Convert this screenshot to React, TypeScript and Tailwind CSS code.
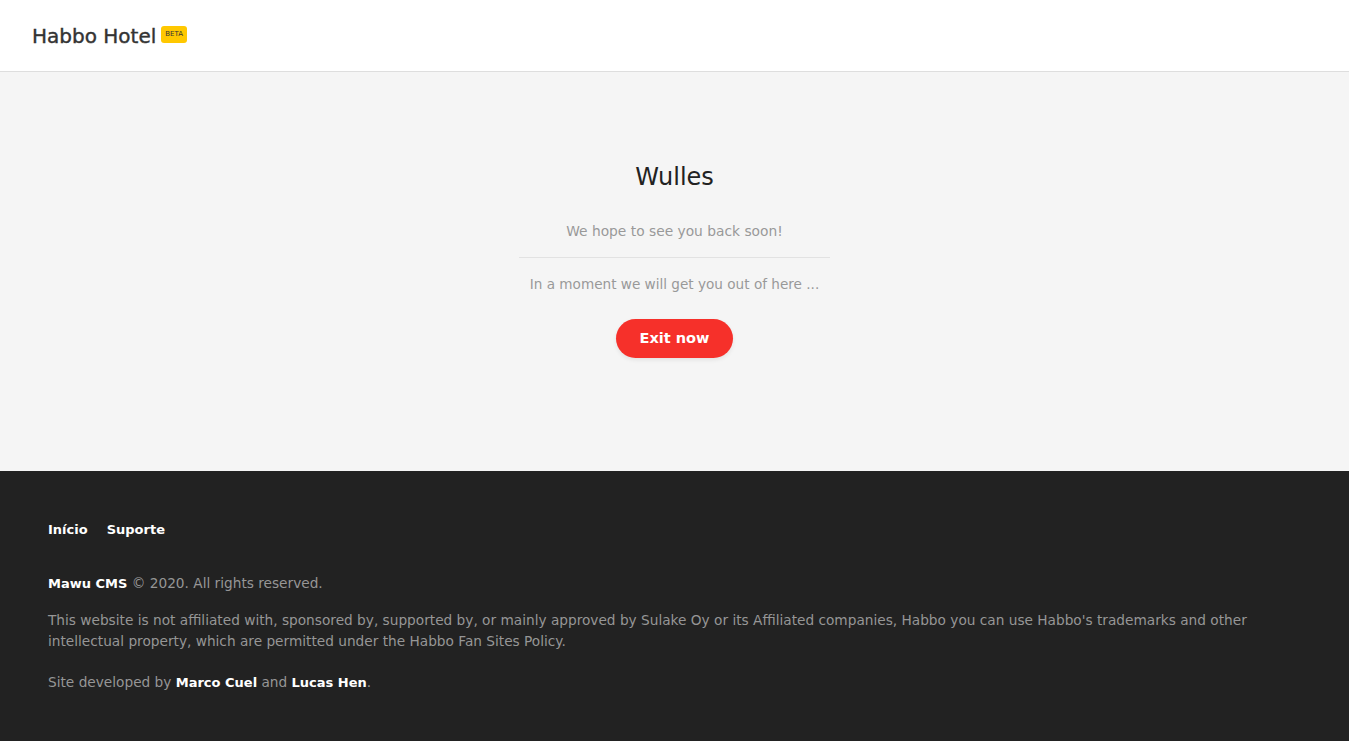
export default function App() {
  const font = { fontFamily: '"DejaVu Sans", "Noto Sans", sans-serif' };
  return (
    <div className="min-h-screen flex flex-col" style={font}>
      <header className="h-[72px] bg-white border-b border-[#dedede] shadow-[0_1px_3px_rgba(0,0,0,0.06)] flex items-center px-8 shrink-0">
        <div className="flex items-center gap-[5px]">
          <span className="text-[20px] text-[#333] tracking-[0px] [-webkit-text-stroke:0.4px_#333]">Habbo Hotel</span>
          <span className="bg-[#ffc800] rounded-[3px] text-[7px] leading-none px-[4px] py-[5px] mt-[-2px] text-[#333] font-medium">BETA</span>
        </div>
      </header>
      <main className="bg-[#f5f5f5] h-[399px] flex flex-col items-center pt-[91px] shrink-0">
        <h1 className="text-[24px] text-[#222] leading-[28px]">Wulles</h1>
        <p className="mt-[30px] text-[13.8px] text-[#999] leading-5">We hope to see you back soon!</p>
        <div className="w-[311px] h-px bg-[#e2e2e2] mt-[16px]" />
        <p className="mt-[16px] text-[13.6px] text-[#999] leading-5">In a moment we will get you out of here ...</p>
        <button className="mt-[25px] w-[117px] h-[39px] rounded-full bg-[#f6302a] text-white font-bold text-[14.5px] shadow-[0_2px_4px_rgba(0,0,0,0.08)]">Exit now</button>
      </main>
      <footer className="bg-[#222222] flex-1 px-12 pt-[49px] pb-10 text-[13.7px]">
        <nav className="flex gap-[19px] text-white font-semibold leading-5 text-[13px]">
          <a>Início</a>
          <a>Suporte</a>
        </nav>
        <p className="mt-[33px] text-[#969696] leading-5"><span className="text-white font-semibold text-[13px]">Mawu CMS</span> © 2020. All rights reserved.</p>
        <p className="mt-[16px] text-[#969696] leading-[21px] max-w-[1220px]">This website is not affiliated with, sponsored by, supported by, or mainly approved by Sulake Oy or its Affiliated companies, Habbo you can use Habbo's trademarks and other intellectual property, which are permitted under the Habbo Fan Sites Policy.</p>
        <p className="mt-[20px] text-[#969696] leading-5">Site developed by <span className="text-white font-semibold text-[13px]">Marco Cuel</span> and <span className="text-white font-semibold text-[13px]">Lucas Hen</span>.</p>
      </footer>
    </div>
  );
}
